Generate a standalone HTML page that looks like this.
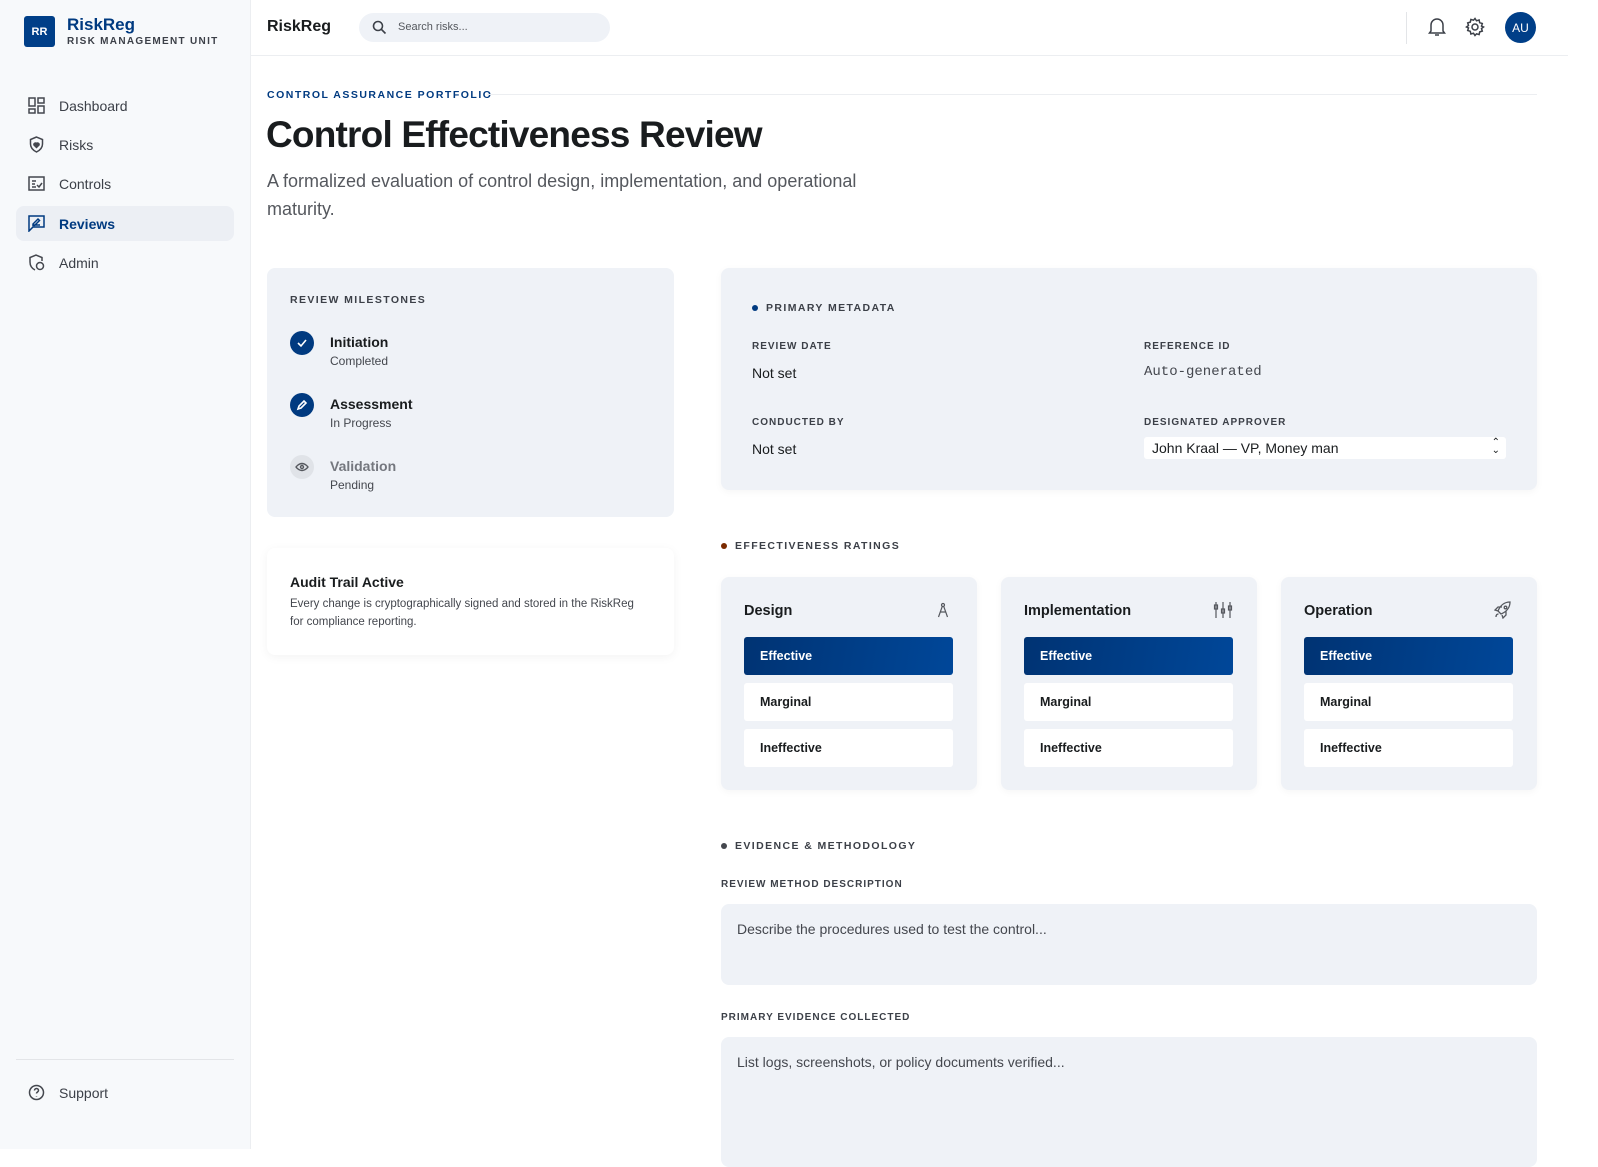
<!DOCTYPE html>
<html><head><meta charset="utf-8"><style>
*{box-sizing:border-box;margin:0;padding:0}
body{width:1598px;height:1149px;overflow:hidden;background:#fff;font-family:"Liberation Sans",sans-serif;color:#191c1e;position:relative}
.sb{position:absolute;left:0;top:0;width:251px;height:1149px;background:#f7f9fb;border-right:1px solid #eceef1}
.logo{position:absolute;left:24px;top:16px;width:31px;height:31px;background:#003f88;border-radius:3px;color:#fff;font-size:11px;font-weight:bold;display:flex;align-items:center;justify-content:center}
.brand{position:absolute;left:67px;top:15px;color:#003a80;font-size:17px;font-weight:bold}
.unit{position:absolute;left:67px;top:36px;font-size:10px;font-weight:bold;letter-spacing:1.3px;color:#3c4048}
.nav{position:absolute;left:16px;width:218px;height:35px;border-radius:8px;display:flex;align-items:center;padding-left:43px;font-size:14px;color:#3c4048}
.nav svg{position:absolute;left:12px;top:9px}
.nav.act{background:#eceff4;color:#003a80;font-weight:bold}
.hdr{position:absolute;left:251px;top:0;width:1317px;height:56px;border-bottom:1px solid #eceef1;background:#fff}
.lbl{font-size:10.5px;font-weight:bold;letter-spacing:1.4px;color:#3c4048}
.card{position:absolute;background:#eff2f7;border-radius:8px}
.btn{position:absolute;left:23px;width:209px;height:38px;border-radius:3px;background:#fff;font-size:12.5px;font-weight:bold;padding:12px 16px;color:#191c1e}
.btn.on{background:linear-gradient(100deg,#003373,#004799);color:#fff}
.rt{position:absolute;left:23px;top:26px;font-size:14.5px;font-weight:bold}
.ta{position:absolute;left:721px;width:816px;background:#eff2f7;border-radius:8px;padding:17px 16px;font-size:14px;color:#44474e}
</style></head><body>
<div class="sb">
<div class="logo">RR</div><div class="brand">RiskReg</div><div class="unit">RISK MANAGEMENT UNIT</div>
<div class="nav" style="top:88px"><svg width="17" height="17" viewBox="0 0 17 17" fill="none" stroke="#44474e" stroke-width="1.5"><rect x="1" y="1" width="6" height="8"/><rect x="10" y="1" width="6" height="5"/><rect x="1" y="12" width="6" height="4"/><rect x="10" y="9" width="6" height="7"/></svg>Dashboard</div>
<div class="nav" style="top:127px"><svg width="17" height="17" viewBox="0 0 17 17" fill="none" stroke="#44474e" stroke-width="1.5"><path d="M8.5 1L2.5 3.5V8c0 4 3 6.5 6 8 3-1.5 6-4 6-8V3.5z"/><path d="M8.5 11.5l-2.5-2.5a1.5 1.5 0 012.5-1.5 1.5 1.5 0 012.5 1.5z" fill="#44474e"/></svg>Risks</div>
<div class="nav" style="top:166px"><svg width="17" height="17" viewBox="0 0 17 17" fill="none" stroke="#44474e" stroke-width="1.5"><rect x="1" y="2" width="15" height="13"/><path d="M4 6h4M4 9h3M4 12h4M9 10l2 2 3-4"/></svg>Controls</div>
<div class="nav act" style="top:206px"><svg width="17" height="17" viewBox="0 0 17 17" fill="none" stroke="#003a80" stroke-width="1.5"><path d="M1 1h15v11H5l-4 4z"/><path d="M5 9l5-5 1.5 1.5-5 5H5zM5 10h7"/></svg>Reviews</div>
<div class="nav" style="top:245px"><svg width="17" height="17" viewBox="0 0 17 17" fill="none" stroke="#44474e" stroke-width="1.5"><path d="M7 16C4 14.5 2 12 2 8V3.5L8 1l6 2.5V7"/><circle cx="12" cy="12" r="3.5"/></svg>Admin</div>
<div style="position:absolute;left:16px;top:1059px;width:218px;border-top:1px solid #e3e5e8"></div>
<div class="nav" style="top:1075px"><svg width="17" height="17" viewBox="0 0 17 17" fill="none" stroke="#44474e" stroke-width="1.5"><circle cx="8.5" cy="8.5" r="7"/><path d="M6.5 6.5a2 2 0 114 0c0 1.5-2 1.5-2 3M8.5 12v.5"/></svg>Support</div>
</div>
<div class="hdr">
<div style="position:absolute;left:16px;top:18px;font-size:16px;font-weight:bold">RiskReg</div>
<div style="position:absolute;left:108px;top:13px;width:251px;height:29px;border-radius:15px;background:#eff2f7;font-size:11px;color:#55585e;padding:8px 0 0 39px">Search risks...
<svg style="position:absolute;left:13px;top:7px" width="15" height="15" viewBox="0 0 15 15" fill="none" stroke="#3c4048" stroke-width="1.6"><circle cx="6" cy="6" r="4.5"/><path d="M9.5 9.5l4 4"/></svg></div>
<div style="position:absolute;left:1155px;top:12px;height:32px;border-left:1px solid #e3e5e8"></div>
<svg style="position:absolute;left:1177px;top:17px" width="18" height="20" viewBox="0 0 18 20" fill="none" stroke="#3c4048" stroke-width="1.5"><path d="M3 14V8a6 6 0 0112 0v6l1.5 2h-15zM7 18h4"/></svg>
<svg style="position:absolute;left:1214px;top:17px" width="20" height="20" viewBox="0 0 20 20" fill="none" stroke="#3c4048" stroke-width="1.5"><circle cx="10" cy="10" r="3"/><path d="M10 1.5l1.5 2.3 2.6-.8.6 2.7 2.6.8-.8 2.6L18.5 10l-2 1.5.8 2.6-2.6.8-.6 2.7-2.6-.8L10 18.5l-1.5-2.3-2.6.8-.6-2.7-2.6-.8.8-2.6L1.5 10l2-1.5-.8-2.6 2.6-.8.6-2.7 2.6.8z"/></svg>
<div style="position:absolute;left:1254px;top:12px;width:31px;height:31px;border-radius:50%;background:#003f88;color:#fff;font-size:12px;display:flex;align-items:center;justify-content:center">AU</div>
</div>
<div style="position:absolute;left:267px;top:89px;font-size:10.5px;font-weight:bold;letter-spacing:1.5px;color:#003a80">CONTROL ASSURANCE PORTFOLIO</div>
<div style="position:absolute;left:487px;top:94px;width:1050px;border-top:1px solid #eceef1"></div>
<div style="position:absolute;left:266px;top:114px;font-size:37px;font-weight:bold;letter-spacing:-0.8px">Control Effectiveness Review</div>
<div style="position:absolute;left:267px;top:167px;width:640px;font-size:18px;line-height:28px;color:#55585e">A formalized evaluation of control design, implementation, and operational maturity.</div>

<div class="card" style="left:267px;top:268px;width:407px;height:249px">
<div class="lbl" style="position:absolute;left:23px;top:26px">REVIEW MILESTONES</div>
<div style="position:absolute;left:23px;top:63px;width:24px;height:24px;border-radius:50%;background:#003a80"><svg width="24" height="24" viewBox="0 0 24 24" fill="none" stroke="#fff" stroke-width="1.6"><path d="M8 12l3 3 5-6"/></svg></div>
<div style="position:absolute;left:63px;top:66px;font-size:14px;font-weight:bold">Initiation</div><div style="position:absolute;left:63px;top:86px;font-size:12px;color:#44474e">Completed</div>
<div style="position:absolute;left:23px;top:125px;width:24px;height:24px;border-radius:50%;background:#003a80"><svg width="24" height="24" viewBox="0 0 24 24" fill="none" stroke="#fff" stroke-width="1.6"><path d="M8 16l1-3 5-5 2 2-5 5z"/></svg></div>
<div style="position:absolute;left:63px;top:128px;font-size:14px;font-weight:bold">Assessment</div><div style="position:absolute;left:63px;top:148px;font-size:12px;color:#44474e">In Progress</div>
<div style="position:absolute;left:23px;top:187px;width:24px;height:24px;border-radius:50%;background:#e0e3e8"><svg width="24" height="24" viewBox="0 0 24 24" fill="none" stroke="#55585e" stroke-width="1.4"><path d="M6 12s2.5-3.5 6-3.5 6 3.5 6 3.5-2.5 3.5-6 3.5S6 12 6 12z"/><circle cx="12" cy="12" r="1.5"/></svg></div>
<div style="position:absolute;left:63px;top:190px;font-size:14px;font-weight:bold;color:#74777e">Validation</div><div style="position:absolute;left:63px;top:210px;font-size:12px;color:#44474e">Pending</div>
</div>
<div style="position:absolute;left:267px;top:548px;width:407px;height:107px;background:#fff;border-radius:8px;box-shadow:0 2px 10px rgba(0,0,0,.05);padding:26px 23px">
<div style="font-size:14px;font-weight:bold">Audit Trail Active</div>
<div style="font-size:11.5px;line-height:18px;color:#44474e;margin-top:5px;width:345px">Every change is cryptographically signed and stored in the RiskReg for compliance reporting.</div></div>

<div class="card" style="left:721px;top:268px;width:816px;height:222px;box-shadow:0 2px 8px rgba(0,0,0,.04)">
<div style="position:absolute;left:31px;top:37px;width:6px;height:6px;border-radius:50%;background:#003a80"></div>
<div class="lbl" style="position:absolute;left:45px;top:34px">PRIMARY METADATA</div>
<div class="lbl" style="position:absolute;left:31px;top:73px;font-size:10px;letter-spacing:1px">REVIEW DATE</div>
<div style="position:absolute;left:31px;top:97px;font-size:14px">Not set</div>
<div class="lbl" style="position:absolute;left:423px;top:73px;font-size:10px;letter-spacing:1px">REFERENCE ID</div>
<div style="position:absolute;left:423px;top:96px;font-size:14px;font-family:'Liberation Mono',monospace;color:#44474e">Auto-generated</div>
<div class="lbl" style="position:absolute;left:31px;top:149px;font-size:10px;letter-spacing:1px">CONDUCTED BY</div>
<div style="position:absolute;left:31px;top:173px;font-size:14px">Not set</div>
<div class="lbl" style="position:absolute;left:423px;top:149px;font-size:10px;letter-spacing:1px">DESIGNATED APPROVER</div>
<div style="position:absolute;left:423px;top:169px;width:362px;height:22px;background:#fff;border-radius:3px;font-size:14px;padding:3px 8px">John Kraal — VP, Money man<span style="position:absolute;right:6px;top:2px;font-size:10px;line-height:8px;text-align:center">⌃<br>⌄</span></div>
</div>

<div style="position:absolute;left:721px;top:543px;width:6px;height:6px;border-radius:50%;background:#7a2a00"></div>
<div class="lbl" style="position:absolute;left:735px;top:540px">EFFECTIVENESS RATINGS</div>

<div class="card" style="left:721px;top:577px;width:256px;height:213px;box-shadow:0 2px 8px rgba(0,0,0,.04)"><div class="rt">Design</div>
<svg style="position:absolute;left:216px;top:25px" width="12" height="16" viewBox="0 0 12 16" fill="none" stroke="#55585e" stroke-width="1.2"><circle cx="6" cy="3" r="1.5"/><path d="M5.3 4.3L1.5 15M6.7 4.3L10.5 15M3 10h6"/></svg>
<div class="btn on" style="top:60px">Effective</div><div class="btn" style="top:106px">Marginal</div><div class="btn" style="top:152px">Ineffective</div></div>
<div class="card" style="left:1001px;top:577px;width:256px;height:213px;box-shadow:0 2px 8px rgba(0,0,0,.04)"><div class="rt">Implementation</div>
<svg style="position:absolute;left:212px;top:24px" width="20" height="18" viewBox="0 0 20 18" fill="none" stroke="#55585e" stroke-width="1.2"><path d="M3 1v16M10 1v16M17 1v16"/><rect x="1.5" y="4" width="3" height="4"/><rect x="8.5" y="8" width="3" height="4"/><rect x="15.5" y="5" width="3" height="4"/></svg>
<div class="btn on" style="top:60px">Effective</div><div class="btn" style="top:106px">Marginal</div><div class="btn" style="top:152px">Ineffective</div></div>
<div class="card" style="left:1281px;top:577px;width:256px;height:213px;box-shadow:0 2px 8px rgba(0,0,0,.04)"><div class="rt">Operation</div>
<svg style="position:absolute;left:213px;top:24px" width="18" height="18" viewBox="0 0 18 18" fill="none" stroke="#55585e" stroke-width="1.3"><path d="M6 12l-2-2c2-5 6-9 12-9 0 6-4 10-9 12zM4 10L1 9l3-3h4M8 14l1 3 3-3v-4M2 16c0-2 1-3 2.5-3"/><circle cx="11.5" cy="6.5" r="1.3"/></svg>
<div class="btn on" style="top:60px">Effective</div><div class="btn" style="top:106px">Marginal</div><div class="btn" style="top:152px">Ineffective</div></div>

<div style="position:absolute;left:721px;top:843px;width:6px;height:6px;border-radius:50%;background:#44474e"></div>
<div class="lbl" style="position:absolute;left:735px;top:840px">EVIDENCE &amp; METHODOLOGY</div>
<div class="lbl" style="position:absolute;left:721px;top:879px;font-size:10px;letter-spacing:1px">REVIEW METHOD DESCRIPTION</div>
<div class="ta" style="top:904px;height:81px">Describe the procedures used to test the control...</div>
<div class="lbl" style="position:absolute;left:721px;top:1012px;font-size:10px;letter-spacing:1px">PRIMARY EVIDENCE COLLECTED</div>
<div class="ta" style="top:1037px;height:130px">List logs, screenshots, or policy documents verified...</div>
</body></html>
